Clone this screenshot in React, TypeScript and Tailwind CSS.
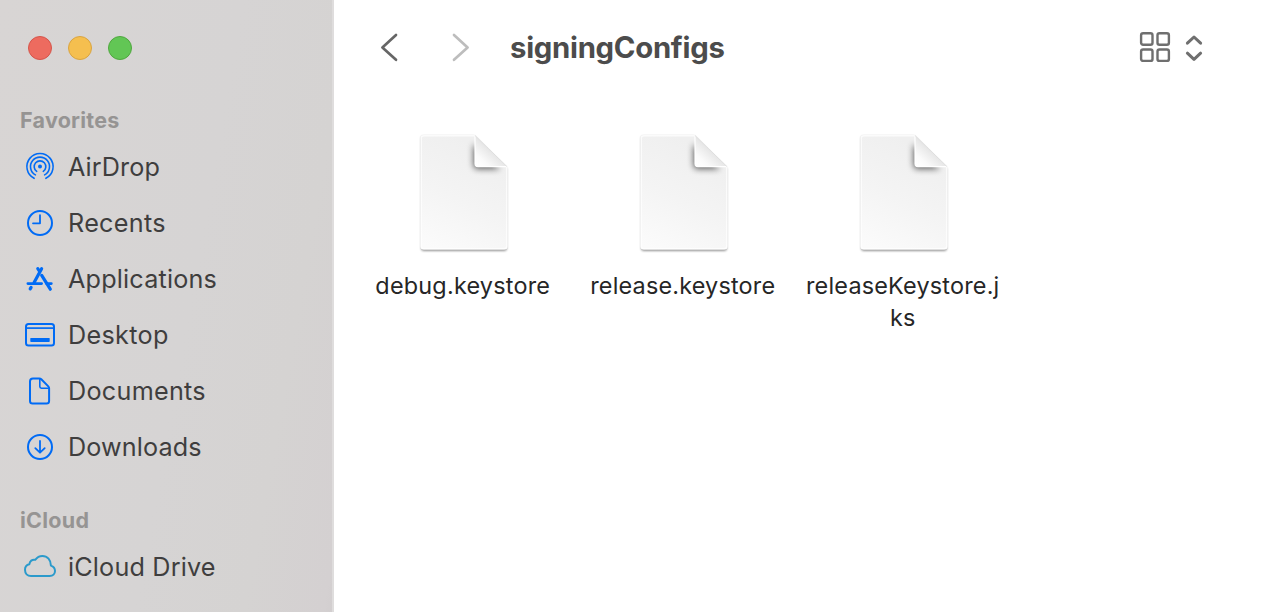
import React, { useId } from "react";

const AirDropIcon = () => (
  <svg width="32" height="32" viewBox="0 0 32 32" fill="none" stroke="#006bf5" strokeWidth="1.6" strokeLinecap="round">
    <path d="M10.1 27.3A13.1 13.1 0 1 1 21.9 27.3" />
    <path d="M11.4 23.9A9.5 9.5 0 1 1 20.6 23.9" />
    <path d="M12.7 20.4A5.8 5.8 0 1 1 19.3 20.4" />
    <circle cx="16" cy="15.6" r="2" fill="#006bf5" stroke="none" />
  </svg>
);

const RecentsIcon = () => (
  <svg width="32" height="32" viewBox="0 0 32 32" fill="none" stroke="#006bf5" strokeWidth="2" strokeLinecap="round" strokeLinejoin="round">
    <circle cx="16" cy="16" r="12" />
    <path d="M16 8.2V16.3H9" strokeWidth="1.8" />
  </svg>
);

const ApplicationsIcon = () => (
  <svg width="32" height="32" viewBox="0 0 32 32" fill="none" stroke="#006bf5" strokeWidth="3.2" strokeLinecap="round">
    <path d="M17.6 5.7L10.1 19.4" />
    <path d="M13.8 5.7L15.3 8" />
    <path d="M17.7 12.4L26.3 26.2" />
    <path d="M3.9 20.6H17.6M22.5 20.6H27.3" strokeWidth="2.8" />
    <path d="M7.1 24.4L6.2 25.9" />
  </svg>
);

const DesktopIcon = () => (
  <svg width="32" height="32" viewBox="0 0 32 32" fill="none" stroke="#006bf5" strokeWidth="2">
    <rect x="2" y="5" width="28" height="21.5" rx="2.5" />
    <path d="M2 9.1H30" strokeWidth="1.7" />
    <rect x="6.3" y="18.9" width="19.4" height="4.1" rx="0.7" fill="#006bf5" stroke="none" />
  </svg>
);

const DocumentsIcon = () => (
  <svg width="32" height="32" viewBox="0 0 32 32" fill="none" stroke="#006bf5" strokeWidth="2" strokeLinejoin="round">
    <path d="M9 3.5H15.3Q16.5 3.5 17.3 4.3L24.3 11.4Q25.1 12.2 25.1 13.3V26Q25.1 28.6 22.5 28.6H8.6Q6 28.6 6 26V6.3Q6 3.5 9 3.5Z" />
    <path d="M15.8 3.8V11.6Q15.8 13.2 17.4 13.2H24.9" strokeWidth="1.6" />
  </svg>
);

const DownloadsIcon = () => (
  <svg width="32" height="32" viewBox="0 0 32 32" fill="none" stroke="#006bf5" strokeWidth="2" strokeLinecap="round" strokeLinejoin="round">
    <circle cx="16" cy="16" r="12" />
    <path d="M16 10V21.4M11.3 17.2L16 21.7L20.7 17.2" strokeWidth="1.8" />
  </svg>
);

const CloudIcon = () => (
  <svg width="34" height="32" viewBox="0 0 34 32" fill="none" stroke="#2b9acb" strokeWidth="2" strokeLinejoin="round" className="shrink-0">
    <path d="M8 25H26.6C30 25 32 22.8 32 20C32 17.2 30.1 15.3 27.9 14.6C28 9 24.3 4.9 19.4 4.9C15.9 4.9 13.6 6.9 12.2 8.8C9.2 8.1 6.6 10.1 6.4 13.3C3.8 13.9 2 16 2 18.8C2 22.4 4.4 25 8 25Z" />
  </svg>
);

const favorites = [
  { label: "AirDrop", Icon: AirDropIcon, tracking: "tracking-[0.1px]" },
  { label: "Recents", Icon: RecentsIcon, tracking: "tracking-[0.3px]" },
  { label: "Applications", Icon: ApplicationsIcon, tracking: "tracking-[0.18px]" },
  { label: "Desktop", Icon: DesktopIcon, tracking: "tracking-[0.3px]" },
  { label: "Documents", Icon: DocumentsIcon, tracking: "tracking-[0.27px]" },
  { label: "Downloads", Icon: DownloadsIcon, tracking: "tracking-[0.13px]" },
];

function SidebarRow({ label, Icon, tracking }: { label: string; Icon: React.FC; tracking: string }) {
  return (
    <li className="flex h-14 items-center">
      <span className="flex w-8 shrink-0 justify-center">
        <Icon />
      </span>
      <span className={`ml-3 whitespace-nowrap text-[25.2px] leading-8 text-[#3f3e3e] ${tracking}`}>{label}</span>
    </li>
  );
}

function FileIcon() {
  const id = useId();
  return (
    <svg width="100" height="128" viewBox="0 0 100 128" className="block">
      <defs>
        <linearGradient id={`${id}p`} gradientUnits="userSpaceOnUse" x1="70" y1="20" x2="20" y2="120">
          <stop offset="0" stopColor="#efefef" />
          <stop offset="0.5" stopColor="#f4f4f4" />
          <stop offset="1" stopColor="#fbfbfb" />
        </linearGradient>
        <linearGradient id={`${id}f`} gradientUnits="userSpaceOnUse" x1="63" y1="36" x2="77" y2="21">
          <stop offset="0" stopColor="#ffffff" />
          <stop offset="0.4" stopColor="#fafafa" />
          <stop offset="1" stopColor="#e6e6e6" />
        </linearGradient>
        <clipPath id={`${id}c`}>
          <path d="M10 5H60.5L93.5 37V116.5Q93.5 119.5 90.5 119.5H9.5Q6.5 119.5 6.5 116.5V8Q6.5 5 10 5Z" />
        </clipPath>
        <filter id={`${id}s`} x="-20%" y="-20%" width="140%" height="140%">
          <feGaussianBlur stdDeviation="0.9" />
        </filter>
        <filter id={`${id}b`} x="-50%" y="-50%" width="200%" height="200%">
          <feGaussianBlur stdDeviation="3" />
        </filter>
      </defs>
      <path d="M10 6H60L93 38.5V118Q93 121 90 121H10Q7 121 7 118V9Q7 6 10 6Z" fill="#000" opacity="0.42" filter={`url(#${id}s)`} />
      <path d="M10 5H60.5L93.5 37V116.5Q93.5 119.5 90.5 119.5H9.5Q6.5 119.5 6.5 116.5V8Q6.5 5 10 5Z" fill={`url(#${id}p)`} />
      <g clipPath={`url(#${id}c)`}>
        <path d="M59.5 14V35Q59.5 39 64 39H86Z" fill="#000" opacity="0.6" filter={`url(#${id}b)`} />
      </g>
      <path d="M60.5 5.8H10Q7.2 5.8 7.2 8.5V116Q7.2 118.8 10 118.8H90Q92.8 118.8 92.8 116V37" fill="none" stroke="#fff" strokeOpacity="0.75" strokeWidth="1.4" />
      <path d="M61 5.5V33.5Q61 36.7 64 36.7H93Z" fill={`url(#${id}f)`} />
      <path d="M61 5.5V33.5Q61 36.7 64 36.7H93" fill="none" stroke="#fff" strokeWidth="1.2" />
      <path d="M61 5.5L93 36.7" fill="none" stroke="#dcdcdc" strokeWidth="0.8" />
    </svg>
  );
}

const files = [
  { lines: ["debug.keystore"], tracking: "tracking-[0.22px]" },
  { lines: ["release.keystore"], tracking: "tracking-[0.2px]" },
  { lines: ["releaseKeystore.j", "ks"], tracking: "tracking-[0.2px]" },
];

export default function App() {
  return (
    <div className="flex h-[612px] w-[1276px] overflow-hidden bg-white font-['Inter',sans-serif]">
      <aside className="flex w-[334px] shrink-0 flex-col border-r-2 border-[#dfdddd] bg-[linear-gradient(100deg,#d8d5d4_0%,#d6d4d4_55%,#d5d3d2_80%,#d4d0d1_98%,#d2cecf_100%)] pl-6">
        <div className="flex h-24 items-center gap-4 pl-1">
          <span className="size-6 rounded-full border border-[#d5554b] bg-[#ed6b5f]" />
          <span className="size-6 rounded-full border border-[#d9a441] bg-[#f5bf4f]" />
          <span className="size-6 rounded-full border border-[#50a73f] bg-[#62c655]" />
        </div>
        <h2 className="-ml-1 mt-1 h-[39px] text-[21.5px] font-bold leading-[40px] tracking-[0.25px] text-[#969493]">Favorites</h2>
        <ul>
          {favorites.map((item) => (
            <SidebarRow key={item.label} {...item} />
          ))}
        </ul>
        <h2 className="-ml-1 mt-[25px] h-[39px] text-[21.5px] font-bold leading-[40px] tracking-[0.25px] text-[#969493]">iCloud</h2>
        <ul>
          <SidebarRow label="iCloud Drive" Icon={CloudIcon} tracking="tracking-[0.17px]" />
        </ul>
      </aside>

      <main className="flex flex-1 flex-col">
        <header className="flex h-24 items-center pl-[42px]">
          <svg width="28" height="36" viewBox="0 0 28 36" fill="none" stroke="#666" strokeWidth="2.7" strokeLinecap="round" strokeLinejoin="round">
            <path d="M20 5L6.4 17.4L20 29.8" />
          </svg>
          <svg width="28" height="36" viewBox="0 0 28 36" fill="none" stroke="#bdbdbd" strokeWidth="2.7" strokeLinecap="round" strokeLinejoin="round" className="ml-11">
            <path d="M6 5L19.6 17.4L6 29.8" />
          </svg>
          <h1 className="ml-[34px] whitespace-nowrap text-[29.3px] font-bold leading-9 tracking-[-0.28px] text-[#4c4c4c]">signingConfigs</h1>
          <svg width="68" height="36" viewBox="0 0 68 36" fill="none" stroke="#6f6f6f" strokeWidth="2.4" strokeLinecap="round" strokeLinejoin="round" className="ml-auto mr-[70px]">
            <rect x="3.1" y="3.3" width="11.4" height="11.4" rx="2" />
            <rect x="19.5" y="3.3" width="11.4" height="11.4" rx="2" />
            <rect x="3.1" y="19.5" width="11.4" height="11.4" rx="2" />
            <rect x="19.5" y="19.5" width="11.4" height="11.4" rx="2" />
            <path d="M49.4 13.2L56 7L62.6 13.2M49.4 23.2L56 29.4L62.6 23.2" strokeWidth="3" />
          </svg>
        </header>
        <section className="flex pl-5 pt-[34px]">
          {files.map((file) => (
            <article key={file.lines[0]} className="flex w-[220px] flex-col items-center">
              <FileIcon />
              <div className={`mt-3 flex flex-col items-center whitespace-nowrap pr-[2.5px] text-[23.4px] leading-8 text-[#262626] ${file.tracking}`}>
                {file.lines.map((line) => (
                  <span key={line}>{line}</span>
                ))}
              </div>
            </article>
          ))}
        </section>
      </main>
    </div>
  );
}
